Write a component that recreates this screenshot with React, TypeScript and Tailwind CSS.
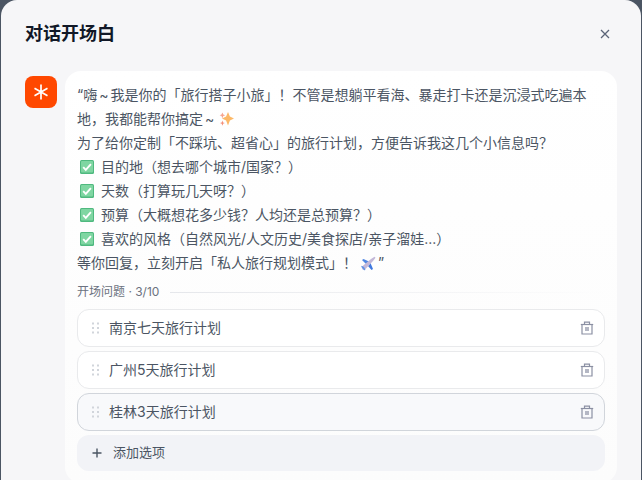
const font = { fontFamily: '"Inter", "Noto Sans CJK SC", sans-serif' };

function CheckEmoji() {
  return (
    <svg className="mr-[7px] ml-[3px] inline-block h-[14px] w-[14px] align-[-2px]" viewBox="0 0 14 14">
      <rect width="14" height="14" rx="1.5" fill="#4fb97f" />
      <rect x="1" y="1" width="12" height="11.5" rx="1" fill="#7fd6a2" />
      <path d="M3.2 7.2 5.8 9.8 10.9 4.2" fill="none" stroke="#fff" strokeWidth="1.9" />
    </svg>
  );
}

function Sparkles() {
  return (
    <svg className="ml-[3px] inline-block h-[15px] w-[15px] align-[-2px]" viewBox="0 0 15 15">
      <path d="M9 1 10.9 5.6 15 7.5 10.9 9.4 9 14.5 7.1 9.4 3 7.5 7.1 5.6Z" fill="#fcb968" />
      <path d="M3.4 1.5 4.3 3.5 6.2 4.3 4.3 5.1 3.4 7.2 2.5 5.1.6 4.3 2.5 3.5Z" fill="#f7a58f" />
      <path d="M3.4 9.5 4.1 11.4 5.8 12.1 4.1 12.8 3.4 14.7 2.7 12.8 1 12.1 2.7 11.4Z" fill="#f58f78" />
    </svg>
  );
}

function Plane() {
  return (
    <svg className="inline-block h-[15px] w-[15px] align-[-3px]" viewBox="0 0 15 15">
      <path d="M2.5 3 1 4 5 8 8 5.5Z" fill="#4f86e2" />
      <path d="M9.5 7 7 10 10.5 14 12 13Z" fill="#3f78de" />
      <path d="M1 12.5 1 10.5 10 3 13.5.8 14.5 1.8 12 5 4 13.5 2 14Z" fill="#c3b8d8" />
      <path d="M.5 9.8 3 11 4.5 14 3.2 14.3 1.8 12.6.3 11Z" fill="#5f93e6" />
    </svg>
  );
}

function Grip() {
  return (
    <svg className="h-[12px] w-[8px] shrink-0" viewBox="0 0 8 12" fill="#d1d5db">
      <rect x="0" y="0.5" width="2" height="2" />
      <rect x="5" y="0.5" width="2" height="2" />
      <rect x="0" y="5" width="2" height="2" />
      <rect x="5" y="5" width="2" height="2" />
      <rect x="0" y="9.5" width="2" height="2" />
      <rect x="5" y="9.5" width="2" height="2" />
    </svg>
  );
}

function Trash() {
  return (
    <svg className="h-[14px] w-[14px]" viewBox="0 0 14 14" fill="none" stroke="#8b90a3" strokeWidth="1.2">
      <path d="M.8 3.5h12.4" />
      <path d="M4.5 3.2V1.2h5v2" />
      <path d="M2 3.5v9.5h10V3.5" />
      <rect x="5" y="6" width="4" height="4" fill="#b4b7c4" stroke="none" />
    </svg>
  );
}

const options = [
  { label: "南京七天旅行计划", hover: false },
  { label: "广州5天旅行计划", hover: false },
  { label: "桂林3天旅行计划", hover: true },
];

const checks = [
  "目的地（想去哪个城市/国家？）",
  "天数（打算玩几天呀？）",
  "预算（大概想花多少钱？人均还是总预算？）",
  "喜欢的风格（自然风光/人文历史/美食探店/亲子溜娃...）",
];

export default function App() {
  return (
    <div className="h-[480px] w-[642px] overflow-hidden bg-[#4b5563] pl-px pr-px" style={font}>
      <div className="flex h-[520px] flex-col rounded-t-2xl bg-[#f6f6f8] pl-6 pr-[24px]">
        {/* Header */}
        <div className="flex h-[71px] shrink-0 items-center justify-between pb-[4px]">
          <h2 className="text-[18px] font-bold leading-6 text-[#111827]">对话开场白</h2>
          <svg className="mr-[5px] h-[14px] w-[14px]" viewBox="0 0 14 14" fill="none" stroke="#5b6478" strokeWidth="1.3">
            <path d="M3 3l8 8M11 3l-8 8" />
          </svg>
        </div>

        <div className="flex gap-2">
          {/* Avatar */}
          <div className="mt-[5px] flex h-8 w-8 shrink-0 items-center justify-center rounded-lg bg-[#ff4800]">
            <svg className="h-[18px] w-[18px]" viewBox="0 0 18 18" fill="none" stroke="#fff" strokeWidth="1.7">
              <path d="M9 1.5v15M2.5 5.2l13 7.6M15.5 5.2l-13 7.6" />
            </svg>
          </div>

          {/* Message card */}
          <div className="min-w-0 flex-1 rounded-2xl bg-gradient-to-b from-white to-[#fcfcfc] px-3 pt-[12px] pb-3">
            <div className="text-[14px] leading-6 text-[#4b5563]">
              <p>
                “嗨<span className="mx-[2px]">~</span>我是你的「旅行搭子小旅」！不管是想躺平看海、暴走打卡还是沉浸式吃遍本地，我都能帮你搞定<span className="mx-[2px]">~</span><Sparkles />
              </p>
              <p>为了给你定制「不踩坑、超省心」的旅行计划，方便告诉我这几个小信息吗？</p>
              {checks.map((text) => (
                <p key={text} className="whitespace-nowrap">
                  <CheckEmoji />
                  {text}
                </p>
              ))}
              <p>等你回复，立刻开启「私人旅行规划模式」！ <Plane /><span className="ml-[2px]">”</span></p>
            </div>

            <div className="mt-[7px] flex h-[20px] items-center gap-[11px]">
              <span className="text-[12px] text-[#6b7280]">开场问题 · 3/10</span>
              <div className="h-px flex-1 bg-gradient-to-r from-[#e5e7eb] to-transparent" />
            </div>

            <div className="mt-[7px] flex flex-col gap-1">
              {options.map((o) => (
                <div
                  key={o.label}
                  className={
                    o.hover
                      ? "flex h-[38px] items-center rounded-xl border border-[#d1d5db] bg-[#f8f9fb] pl-[14px] pr-[10px]"
                      : "flex h-[38px] items-center rounded-xl border border-[#e9eaec] bg-white pl-[14px] pr-[10px]"
                  }
                >
                  <Grip />
                  <span className="ml-[9px] flex-1 pb-[2px] text-[14px] text-[#4b5563]">{o.label}</span>
                  <Trash />
                </div>
              ))}
              <div className="flex h-[36px] items-center rounded-xl bg-[#f2f3f7] pl-[14px]">
                <svg className="h-[12px] w-[12px]" viewBox="0 0 12 12" fill="none" stroke="#4b5563" strokeWidth="1.4">
                  <path d="M6 1.5v9M1.5 6h9" />
                </svg>
                <span className="ml-[10px] text-[13px] text-[#4b5563]">添加选项</span>
              </div>
            </div>
          </div>
        </div>
      </div>
    </div>
  );
}
